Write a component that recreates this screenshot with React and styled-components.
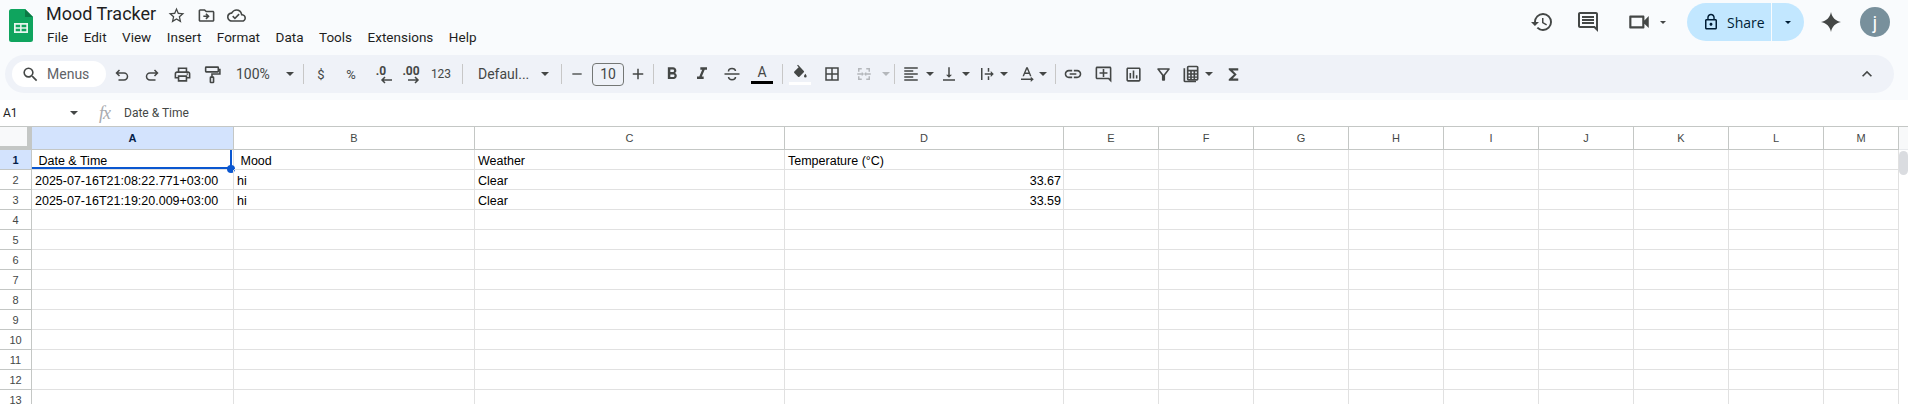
import React from "react";
import styled, { createGlobalStyle } from "styled-components";
import {
  MdStarBorder, MdOutlineDriveFileMove, MdOutlineCloudDone, MdHistory, MdOutlineComment,
  MdOutlineVideocam, MdLockOutline, MdSearch, MdOutlinePrint,
  MdFormatBold, MdFormatItalic, MdOutlineBorderAll, MdFormatAlignLeft,
  MdVerticalAlignBottom, MdLink, MdOutlineAddComment, MdOutlineInsertChart, MdOutlineFilterAlt,
  MdFunctions, MdKeyboardArrowUp, MdAdd, MdRemove,
} from "react-icons/md";

const Global = createGlobalStyle`
  html, body { margin: 0; padding: 0; background: #fff; overflow: hidden; }
  body { font-family: "Roboto", "Liberation Sans", sans-serif; color: #1f1f1f; }
`;

const Page = styled.div`
  width: 1908px;
  height: 404px;
  overflow: hidden;
  display: flex;
  flex-direction: column;
`;

/* top bar */
const Chrome = styled.div`
  background: #f9fbfd;
  height: 100px;
  flex: none;
`;
const TitleBar = styled.header`
  height: 55px;
  display: flex;
  padding-left: 9px;
  box-sizing: border-box;
`;
const Logo = styled.svg`
  width: 24px;
  height: 33px;
  margin-top: 9px;
  flex: none;
`;
const TitleBlock = styled.div`
  margin-left: 13px;
  flex: 1;
`;
const TitleRow = styled.div`
  display: flex;
  align-items: center;
  height: 28px;
  color: #444746;
`;
const DocName = styled.div`
  font-size: 18px;
  color: #1f1f1f;
  width: 115px;
  margin-top: -1px;
  white-space: nowrap;
`;
const TitleIcon = styled.span`
  width: 30px;
  margin-top: 2px;
  display: flex;
  justify-content: center;
`;
const Menu = styled.nav`
  display: flex;
  margin-top: -1px;
`;
const MenuItem = styled.span`
  font-size: 13.5px;
  line-height: 20px;
  margin-left: 1px;
  margin-right: 14.500px;
  color: #1f1f1f;
`;
const Actions = styled.div`
  display: flex;
  align-items: center;
  height: 44px;
  color: #444746;
`;
const ActionIcon = styled.span`
  width: ${(p) => p.$w}px;
  margin-left: ${(p) => p.$ml || 0}px;
  display: flex;
  justify-content: center;
`;
const Share = styled.div`
  display: flex;
  height: 38px;
  width: 117px;
  margin-left: 21px;
  border-radius: 19px;
  overflow: hidden;
  background: #c2e7ff;
  color: #001d35;
`;
const ShareMain = styled.div`
  width: 85px;
  display: flex;
  align-items: center;
  padding-left: 15px;
  box-sizing: border-box;
  gap: 7px;
  font-size: 14px;
  font-family: "Open Sans", sans-serif;
  border-right: 1px solid #f9fbfd;
`;
const ShareDrop = styled.div`
  flex: 1;
  display: flex;
  align-items: center;
  justify-content: center;
`;
const Avatar = styled.div`
  width: 30px;
  height: 30px;
  border-radius: 50%;
  background: #78909c;
  color: #fff;
  font-size: 18px;
  display: flex;
  align-items: center;
  justify-content: center;
  margin-left: 2px;
  margin-right: 18px;
`;
const Caret = styled.i`
  display: block;
  flex: none;
  width: 0;
  height: 0;
  border-left: 4px solid transparent;
  border-right: 4px solid transparent;
  border-top: 4px solid ${(p) => p.$color || "#444746"};
  ${(p) => p.$small && "border-left-width: 3px; border-right-width: 3px; border-top-width: 3px;"}
`;

/* toolbar */
const Toolbar = styled.div`
  height: 38px;
  margin: 0 14px 0 5px;
  padding-left: 7px;
  border-radius: 19px;
  background: #eff2f8;
  display: flex;
  align-items: center;
  color: #444746;
`;
const SearchPill = styled.div`
  width: 94px;
  height: 26px;
  border-radius: 13px;
  background: #fff;
  display: flex;
  align-items: center;
  box-sizing: border-box;
  padding-left: 9px;
  gap: 7px;
  margin-right: 1px;
  font-size: 14px;
  color: #5f6368;
`;
const Btn = styled.div`
  width: ${(p) => p.$w || 30}px;
  height: 26px;
  flex: none;
  display: flex;
  align-items: center;
  justify-content: ${(p) => (p.$start ? "flex-start" : "center")};
  padding-left: ${(p) => p.$pl || 0}px;
  gap: ${(p) => p.$gap || 0}px;
  box-sizing: border-box;
  font-size: ${(p) => p.$fs || 14}px;
  color: ${(p) => (p.$off ? "#b4b7bb" : "#444746")};
`;
const Sep = styled.div`
  width: 1px;
  height: 20px;
  flex: none;
  background: #c7c7c7;
  margin: 0 ${(p) => p.$r ?? 2}px 0 ${(p) => p.$l ?? 6}px;
`;
const SizeBox = styled.div`
  width: 32px;
  height: 23px;
  flex: none;
  border: 1px solid #747775;
  border-radius: 4px;
  box-sizing: border-box;
  display: flex;
  align-items: center;
  justify-content: center;
  font-size: 14px;
  color: #444746;
`;
const ColorIcon = styled.div`
  display: flex;
  flex-direction: column;
  align-items: center;
  width: 22px;
  font-size: 14px;
  line-height: 14px;
`;
const ColorBar = styled.div`
  width: 22px;
  height: 3px;
  margin-top: 2px;
  background: ${(p) => p.$color};
`;
const Decimal = styled.div`
  position: relative;
  font-size: 12px;
  font-weight: 700;
  line-height: 12px;
  margin-top: -6px;
`;
const Collapse = styled.div`
  margin-left: auto;
  margin-right: 17px;
  display: flex;
`;

/* formula bar */
const FormulaBar = styled.div`
  height: 26px;
  flex: none;
  background: #fff;
  display: flex;
  align-items: center;
  box-sizing: border-box;
  font-size: 12px;
  color: #444746;
`;
const NameBox = styled.div`
  width: 78px;
  padding-left: 3px;
  box-sizing: border-box;
  display: flex;
  align-items: center;
  justify-content: space-between;
  font-size: 12px;
  color: #1f1f1f;
`;
const Fx = styled.span`
  font-family: "Liberation Serif", serif;
  font-style: italic;
  font-size: 18px;
  color: #a8abaf;
  margin-left: 21px;
  width: 25px;
  letter-spacing: -1px;
`;

/* grid */
const Sheet = styled.div`
  flex: 1;
  overflow: hidden;
  display: grid;
  grid-template-columns: 32px 202px 241px 310px 279px repeat(8, 95px) 75px 9px;
  grid-template-rows: 23px repeat(13, 20px);
  border-top: 1px solid #c4c7c5;
  background: #fff;
  font-family: "Liberation Sans", Arial, sans-serif;
`;
const Corner = styled.div`
  background: #f8f9fa;
  border-right: 5px solid #c4c7c5;
  border-bottom: 4px solid #c4c7c5;
  box-sizing: border-box;
`;
const HeadCell = styled.div`
  display: flex;
  align-items: center;
  justify-content: center;
  box-sizing: border-box;
  font-size: 11px;
  color: #444746;
  border-right: 1px solid #c4c7c5;
  border-bottom: 1px solid #c4c7c5;
  ${(p) => p.$active && "background: #d3e3fd; color: #041e49; font-weight: 700;"}
`;
const Cell = styled.div`
  position: relative;
  display: flex;
  align-items: center;
  box-sizing: border-box;
  padding: 2px 2px 0 3px;
  font-size: 12.5px;
  color: #000;
  white-space: pre;
  border-right: 1px solid #e1e1e1;
  border-bottom: 1px solid #e1e1e1;
  justify-content: ${(p) => (p.$right ? "flex-end" : "flex-start")};
`;
const Selection = styled.span`
  position: absolute;
  inset: 0 1px 0 0;
  border-right: 2px solid #0b57d0;
  border-bottom: 2px solid #0b57d0;
`;
const Handle = styled.span`
  position: absolute;
  right: -5px;
  bottom: -6px;
  width: 8px;
  height: 8px;
  border-radius: 50%;
  background: #0b57d0;
`;
const RailHead = styled.div`
  background: #f8f9fa;
  border-bottom: 1px solid #e8eaed;
`;
const Rail = styled.div`
  grid-column: 15;
  grid-row: 2 / span 13;
  position: relative;
  background: #fff;
`;
const Thumb = styled.div`
  position: absolute;
  top: 1px;
  left: 0;
  width: 9px;
  height: 24px;
  border-radius: 5px;
  background: #dadce0;
`;

const COLS = ["A", "B", "C", "D", "E", "F", "G", "H", "I", "J", "K", "L", "M"];
const MENUS = ["File", "Edit", "View", "Insert", "Format", "Data", "Tools", "Extensions", "Help"];
const ROWS = {
  1: [" Date & Time", " Mood", "Weather", "Temperature (°C)"],
  2: ["2025-07-16T21:08:22.771+03:00", "hi", "Clear", "33.67"],
  3: ["2025-07-16T21:19:20.009+03:00", "hi", "Clear", "33.59"],
};

const Icon = ({ children, size = 18 }) => (
  <svg width={size} height={size} viewBox="0 0 24 24" fill="currentColor">{children}</svg>
);

const Line = ({ children, size = 18 }) => (
  <svg width={size} height={size} viewBox="0 0 18 18" fill="none" stroke="currentColor" strokeWidth="1.500">{children}</svg>
);

const SheetsLogo = () => (
  <Logo viewBox="0 0 24 33">
    <path d="M16 0H2.500A2.500 2.500 0 0 0 0 2.500v28A2.500 2.500 0 0 0 2.500 33h19a2.500 2.500 0 0 0 2.500-2.500V8z" fill="#0fa45e" />
    <path d="M16 0v8h8z" fill="#0a7a45" />
    <path d="M5 14h14v10H5zm1.700 1.700v2.500h4.400v-2.500zm5.900 0v2.500h4.700v-2.500zm-5.900 4v2.600h4.400v-2.600zm5.900 0v2.600h4.700v-2.600z" fill="#e8f5ee" fillRule="evenodd" />
  </Logo>
);

const Sparkle = () => (
  <svg width="20" height="20" viewBox="0 0 20 20" fill="#444746">
    <path d="M10 0c1 5.500 4.500 9 10 10-5.500 1-9 4.500-10 10-1-5.500-4.500-9-10-10 5.500-1 9-4.500 10-10z" />
  </svg>
);

const UndoIcon = () => (
  <Line><path d="M6.500 5 3.500 8l3 3M3.500 8h7.500a3.500 3.500 0 0 1 0 7H5.500" /></Line>
);

const RedoIcon = () => (
  <Line><path d="M11.500 5l3 3-3 3M14.500 8H7a3.500 3.500 0 0 0 0 7h5.500" /></Line>
);

const RollerIcon = () => (
  <Line size={19}>
    <rect x="2.500" y="2" width="12" height="4.500" rx="0.500" />
    <path d="M14.500 4.200h1.500v4.300H8.500v3" />
    <rect x="7" y="11.500" width="3" height="5" rx="0.500" />
  </Line>
);

const StrikeIcon = () => (
  <Line>
    <path d="M1.500 9h15" />
    <path d="M5.500 6.500C5.500 4.500 7 3.500 9 3.500s3.300 1 3.500 2.500" />
    <path d="M5.500 12c.2 1.700 1.600 2.700 3.500 2.700s3.500-1 3.500-2.700" />
  </Line>
);

const MergeIcon = () => (
  <Icon>
    <path d="M4 4h5v2H6v3H4zm11 0h5v5h-2V6h-3zM4 15h2v3h3v2H4zm14 0h2v5h-5v-2h3zM3 11h6V9l3 3-3 3v-2H3zm18 0h-6V9l-3 3 3 3v-2h6z" />
  </Icon>
);

const WrapIcon = () => (
  <Icon>
    <path d="M4 4h2v16H4zM13 4h2v5h-2zm0 11h2v5h-2zM9 11h8V8l4 4-4 4v-3H9z" />
  </Icon>
);

const RotateIcon = () => (
  <Icon>
    <path d="M11 3h2l5 12h-2l-1.200-3H9.200L8 15H6zm1 2.500L10 10h4zM4 18h13v-2.500l4 3.500-4 3.500V20H4z" />
  </Icon>
);

const FillIcon = () => (
  <Icon size={16}>
    <path d="M9 1 7.600 2.400 10 4.800 3.500 11.300a1.500 1.500 0 0 0 0 2.100l5.600 5.600a1.500 1.500 0 0 0 2.100 0l6.500-6.500a1.500 1.500 0 0 0 0-2.100zM20 14.500s-2 2.300-2 3.700a2 2 0 0 0 4 0c0-1.400-2-3.700-2-3.700z" />
  </Icon>
);

const CalcIcon = () => (
  <Icon size={20}>
    <path d="M3 5h2v15h13v2H5a2 2 0 0 1-2-2z" />
    <path d="M9 2h10a2 2 0 0 1 2 2v14a2 2 0 0 1-2 2H9a2 2 0 0 1-2-2V4a2 2 0 0 1 2-2zm0 2v3h10V4zm0 5v2h2V9zm4 0v2h2V9zm4 0v2h2V9zm-8 4v2h2v-2zm4 0v2h2v-2zm4 0v2h2v-2zm-8 3.500V18h2v-1.500zm4 0V18h2v-1.500zm4 0V18h2v-1.500z" fillRule="evenodd" />
  </Icon>
);

const DecimalBtn = ({ label, dir }) => (
  <Btn>
    <Decimal>
      {label}
      <svg
        width="12"
        height="8"
        viewBox="0 0 12 8"
        fill="none"
        stroke="#444746"
        strokeWidth="1.500"
        style={{ position: "absolute", right: dir === "left" ? -6 : 0, top: 11 }}
      >
        {dir === "left" ? <path d="M12 4H2M5 1 2 4l3 3" /> : <path d="M0 4h10M7 1l3 3-3 3" />}
      </svg>
    </Decimal>
  </Btn>
);

const TopBar = () => (
  <TitleBar>
    <SheetsLogo />
    <TitleBlock>
      <TitleRow>
        <DocName>Mood Tracker</DocName>
        <TitleIcon><MdStarBorder size={19} /></TitleIcon>
        <TitleIcon><MdOutlineDriveFileMove size={19} /></TitleIcon>
        <TitleIcon><MdOutlineCloudDone size={19} /></TitleIcon>
      </TitleRow>
      <Menu>
        {MENUS.map((m) => <MenuItem key={m}>{m}</MenuItem>)}
      </Menu>
    </TitleBlock>
    <Actions>
      <ActionIcon $w={46}><MdHistory size={24} /></ActionIcon>
      <ActionIcon $w={46}><MdOutlineComment size={24} /></ActionIcon>
      <ActionIcon $w={42} $ml={7}><MdOutlineVideocam size={26} /></ActionIcon>
      <Caret $small />
      <Share>
        <ShareMain><MdLockOutline size={18} />Share</ShareMain>
        <ShareDrop><Caret $small $color="#001d35" /></ShareDrop>
      </Share>
      <ActionIcon $w={54}><Sparkle /></ActionIcon>
      <Avatar>j</Avatar>
    </Actions>
  </TitleBar>
);

const Tools = () => (
  <Toolbar>
    <SearchPill><MdSearch size={19} color="#444746" />Menus</SearchPill>
    <Btn><UndoIcon /></Btn>
    <Btn><RedoIcon /></Btn>
    <Btn><MdOutlinePrint size={19} /></Btn>
    <Btn><RollerIcon /></Btn>
    <Btn $w={69} $start $pl={9} $gap={16}>100%<Caret /></Btn>
    <Sep $l={7} />
    <Btn $fs={13}>$</Btn>
    <Btn $fs={13}>%</Btn>
    <DecimalBtn label=".0" dir="left" />
    <DecimalBtn label=".00" dir="right" />
    <Btn $fs={12}>123</Btn>
    <Sep />
    <Btn $w={95} $start $pl={13} $gap={12}>Defaul...<Caret /></Btn>
    <Sep $l={1} $r={0} />
    <Btn $w={30}><MdRemove size={16} /></Btn>
    <SizeBox>10</SizeBox>
    <Btn $w={28}><MdAdd size={18} /></Btn>
    <Sep $l={1} $r={3} />
    <Btn><MdFormatBold size={20} /></Btn>
    <Btn><MdFormatItalic size={20} /></Btn>
    <Btn><StrikeIcon /></Btn>
    <Btn><ColorIcon>A<ColorBar $color="#000" /></ColorIcon></Btn>
    <Sep $l={5} $r={2} />
    <Btn><ColorIcon><FillIcon /><ColorBar $color="#fff" /></ColorIcon></Btn>
    <Btn $w={34}><MdOutlineBorderAll size={18} /></Btn>
    <Btn $w={30} $off><MergeIcon /></Btn>
    <Btn $w={14} $off><Caret $color="#b4b7bb" /></Btn>
    <Sep $l={1} $r={3} />
    <Btn $w={26} $start $pl={4}><MdFormatAlignLeft size={18} /></Btn>
    <Btn $w={11}><Caret /></Btn>
    <Btn $w={28}><MdVerticalAlignBottom size={18} /></Btn>
    <Btn $w={6}><Caret /></Btn>
    <Btn $w={30} $pl={6}><WrapIcon /></Btn>
    <Btn $w={10}><Caret /></Btn>
    <Btn $w={28} $pl={8}><RotateIcon /></Btn>
    <Btn $w={12}><Caret /></Btn>
    <Sep />
    <Btn><MdLink size={20} /></Btn>
    <Btn><MdOutlineAddComment size={19} /></Btn>
    <Btn><MdOutlineInsertChart size={19} /></Btn>
    <Btn><MdOutlineFilterAlt size={19} /></Btn>
    <Btn $w={26}><CalcIcon /></Btn>
    <Btn $w={10}><Caret /></Btn>
    <Btn $w={38}><MdFunctions size={19} /></Btn>
    <Collapse><MdKeyboardArrowUp size={20} /></Collapse>
  </Toolbar>
);

const Grid = () => (
  <Sheet>
    <Corner />
    {COLS.map((c) => <HeadCell key={c} $active={c === "A"}>{c}</HeadCell>)}
    <RailHead />
    {Array.from({ length: 13 }, (_, i) => i + 1).flatMap((r) => [
      <HeadCell key={`h${r}`} $active={r === 1}>{r}</HeadCell>,
      ...COLS.map((c, i) => {
        const value = ROWS[r]?.[i];
        const selected = r === 1 && i === 0;
        return (
          <Cell key={`${c}${r}`} $right={i === 3 && r > 1}>
            {value}
            {selected && <Selection><Handle /></Selection>}
          </Cell>
        );
      }),
    ])}
    <Rail><Thumb /></Rail>
  </Sheet>
);

export default function App() {
  return (
    <Page>
      <Global />
      <Chrome>
        <TopBar />
        <Tools />
      </Chrome>
      <FormulaBar>
        <NameBox>A1<Caret /></NameBox>
        <Fx>fx</Fx>
        Date &amp; Time
      </FormulaBar>
      <Grid />
    </Page>
  );
}
